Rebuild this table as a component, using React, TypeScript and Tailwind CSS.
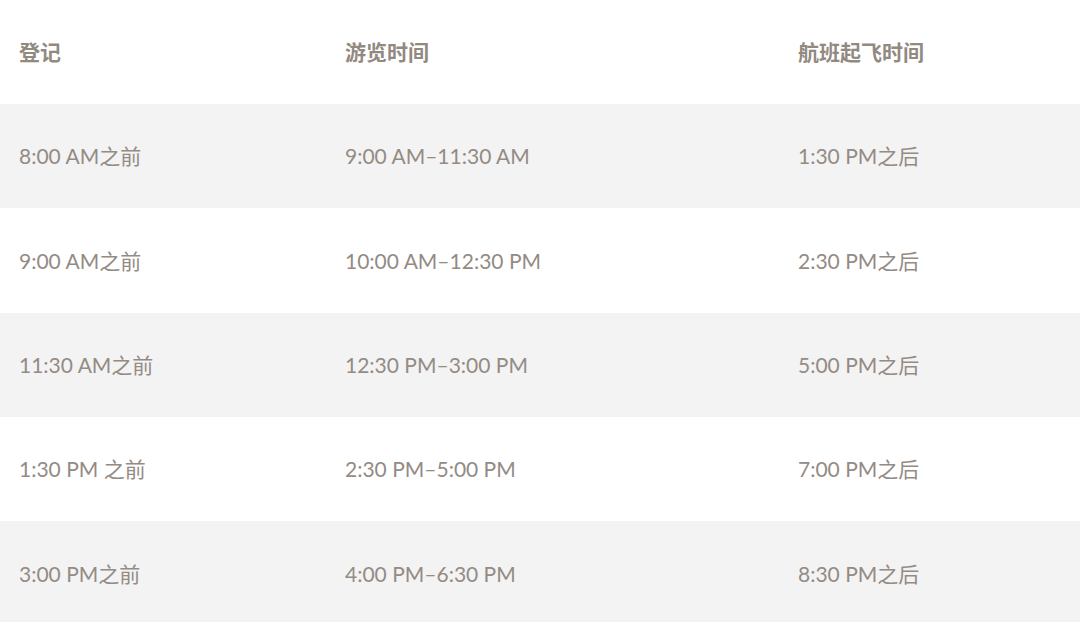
const rows = [
  ["8:00 AM之前", "9:00 AM–11:30 AM", "1:30 PM之后"],
  ["9:00 AM之前", "10:00 AM–12:30 PM", "2:30 PM之后"],
  ["11:30 AM之前", "12:30 PM–3:00 PM", "5:00 PM之后"],
  ["1:30 PM 之前", "2:30 PM–5:00 PM", "7:00 PM之后"],
  ["3:00 PM之前", "4:00 PM–6:30 PM", "8:30 PM之后"],
];

export default function App() {
  return (
    <div
      className="w-[1080px] h-[622px] overflow-hidden bg-white text-[21px] text-[#938b84]"
      style={{ fontFamily: "Lato, 'Noto Sans CJK SC', sans-serif" }}
    >
      {/* Header */}
      <div className="grid grid-cols-[326px_453px_1fr] h-[104px] items-center pl-[19px] font-bold text-[#928980]">
        <div>登记</div>
        <div>游览时间</div>
        <div>航班起飞时间</div>
      </div>

      {rows.map((r, i) => (
        <div
          key={i}
          className={`grid grid-cols-[326px_453px_1fr] h-[104.3px] items-center pl-[19px] ${
            i % 2 === 0 ? "bg-[#f4f3f3]" : "bg-white"
          }`}
        >
          {r.map((c, j) => (
            <div key={j}>{c}</div>
          ))}
        </div>
      ))}
    </div>
  );
}
